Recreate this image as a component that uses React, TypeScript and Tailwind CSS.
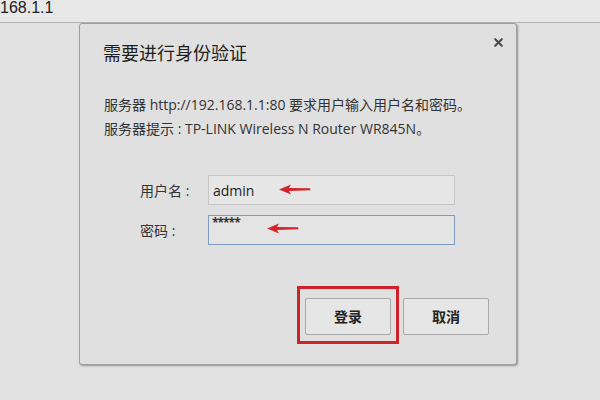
import React from "react";
import { X } from "lucide-react";

const Arrow = ({ className }: { className: string }) => (
  <svg className={className} width="32" height="11" viewBox="0 0 32 11">
    <path d="M0 5.5 L12 0.5 L10 4 L31 4.3 L31.5 6.2 L10 7 L12 10.5 Z" fill="#d3252b" />
  </svg>
);

const App = () => {
  return (
    <div className="w-[600px] h-[400px] overflow-hidden bg-[#e2e2e2] font-['Open_Sans','Noto_Sans_CJK_SC',sans-serif] text-[#2a2a2a]">
      {/* address bar remnant */}
      <div className="h-[23px] bg-[#e8e8e8] border-b border-[#b3b3b3]">
        <p className="text-[16px] leading-[15px] font-['Liberation_Sans',sans-serif] text-[#222]">
          168.1.1
        </p>
      </div>

      {/* auth dialog */}
      <div className="relative ml-[79px] w-[438px] h-[342px] bg-[#e0e0e0] border border-[#9e9e9e] rounded-[3px] shadow-[1px_1px_2px_rgba(0,0,0,0.35)]">
        <X className="absolute right-[11px] top-[12px] text-[#4a4a4a]" size={13} strokeWidth={4} />

        <p className="pl-[23px] pt-[17px] text-[18px] leading-[24px] text-[#1e1e1e]">
          需要进行身份验证
        </p>

        <div className="mt-[28px] pl-[24px] text-[14px] leading-[24px] text-[#333]">
          <p>服务器 http://192.168.1.1:80 要求用户输入用户名和密码。</p>
          <p>服务器提示 : TP-LINK Wireless N Router WR845N。</p>
        </div>

        {/* form */}
        <div className="mt-[34px] pl-[60px] flex flex-col gap-[10px]">
          <div className="flex items-center">
            <span className="w-[68px] text-[14px] text-[#333]">用户名 :</span>
            <div className="relative w-[247px] h-[30px] bg-[#e6e6e6] border border-[#c6c6c6] flex items-center pl-[4px]">
              <span className="text-[14px] text-[#222]">admin</span>
              <Arrow className="absolute left-[70px] top-[8px]" />
            </div>
          </div>
          <div className="flex items-center">
            <span className="w-[68px] text-[14px] text-[#333]">密码 :</span>
            <div className="relative w-[247px] h-[30px] bg-[#e4e4e4] border border-[#7f9cc2] flex items-start pl-[3px]">
              <span className="text-[12px] leading-[14px] font-bold tracking-[-1px] text-[#333]">*****</span>
              <Arrow className="absolute left-[58px] top-[7px]" />
            </div>
          </div>
        </div>

        {/* buttons */}
        <div className="mt-[53px] pr-[27px] flex justify-end gap-[12px]">
          <div className="relative">
            <button className="w-[86px] h-[37px] bg-[#e6e6e6] border border-[#a9a9a9] rounded-[2px] text-[14px] font-semibold text-[#222]">
              登录
            </button>
            <div className="absolute -left-[8px] -right-[8px] -top-[12px] -bottom-[9px] border-[3px] border-[#cf2228]" />
          </div>
          <button className="w-[86px] h-[37px] bg-[#e6e6e6] border border-[#a9a9a9] rounded-[2px] text-[14px] font-semibold text-[#222]">
            取消
          </button>
        </div>
      </div>
    </div>
  );
};

export default App;
